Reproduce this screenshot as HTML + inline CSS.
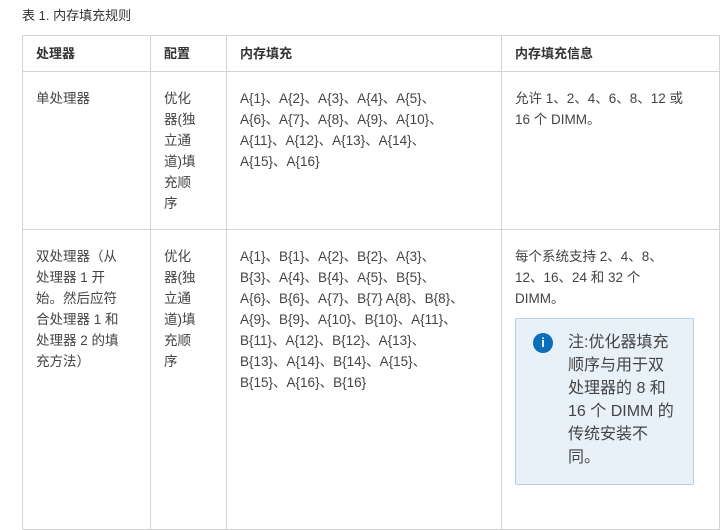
<!DOCTYPE html>
<html><head><meta charset="utf-8"><style>
body{margin:0;background:#fff;font-family:"Liberation Sans","Noto Sans CJK SC",sans-serif;color:#444;font-size:13.5px;width:726px;height:506px;overflow:hidden;position:relative}
.cap{position:absolute;left:22px;top:5px;font-size:13px;color:#333}
table{position:absolute;left:22px;top:35px;border-collapse:collapse;table-layout:fixed;width:697px}
td,th{border:1px solid #d4d4d4;vertical-align:top;text-align:left;padding:0 4px 0 13px;line-height:21px;white-space:nowrap;overflow:hidden}
th{height:35px;vertical-align:middle;font-weight:bold;color:#333;font-size:13px}
tr.r1 td{height:158px;padding-top:16px;box-sizing:border-box}
tr.r2 td{height:300px;padding-top:16px;box-sizing:border-box}
.note{margin-top:9px;width:179px;height:167px;box-sizing:border-box;border:1px solid #b9cfe4;background:#e8f0f8;border-radius:2px;position:relative;font-size:16px;line-height:23px;color:#444;padding:12px 4px 0 52px}
.ic{position:absolute;left:17px;top:14px;width:20px;height:20px;border-radius:50%;background:#0b6ebd;color:#fff;font-weight:bold;font-size:13px;line-height:20px;text-align:center}
</style></head><body>
<div class="cap">表 1. 内存填充规则</div>
<table>
<colgroup><col style="width:128px"><col style="width:76px"><col style="width:275px"><col style="width:218px"></colgroup>
<tr><th>处理器</th><th>配置</th><th>内存填充</th><th>内存填充信息</th></tr>
<tr class="r1"><td>单处理器</td><td>优化<br>器(独<br>立通<br>道)填<br>充顺<br>序</td><td>A{1}、A{2}、A{3}、A{4}、A{5}、<br>A{6}、A{7}、A{8}、A{9}、A{10}、<br>A{11}、A{12}、A{13}、A{14}、<br>A{15}、A{16}</td><td>允许 1、2、4、6、8、12 或<br>16 个 DIMM。</td></tr>
<tr class="r2"><td>双处理器（从<br>处理器 1 开<br>始。然后应符<br>合处理器 1 和<br>处理器 2 的填<br>充方法）</td><td>优化<br>器(独<br>立通<br>道)填<br>充顺<br>序</td><td>A{1}、B{1}、A{2}、B{2}、A{3}、<br>B{3}、A{4}、B{4}、A{5}、B{5}、<br>A{6}、B{6}、A{7}、B{7} A{8}、B{8}、<br>A{9}、B{9}、A{10}、B{10}、A{11}、<br>B{11}、A{12}、B{12}、A{13}、<br>B{13}、A{14}、B{14}、A{15}、<br>B{15}、A{16}、B{16}</td><td>每个系统支持 2、4、8、<br>12、16、24 和 32 个<br>DIMM。<div class="note"><div class="ic">i</div>注:优化器填充<br>顺序与用于双<br>处理器的 8 和<br>16 个 DIMM 的<br>传统安装不<br>同。</div></td></tr>
</table>
</body></html>
